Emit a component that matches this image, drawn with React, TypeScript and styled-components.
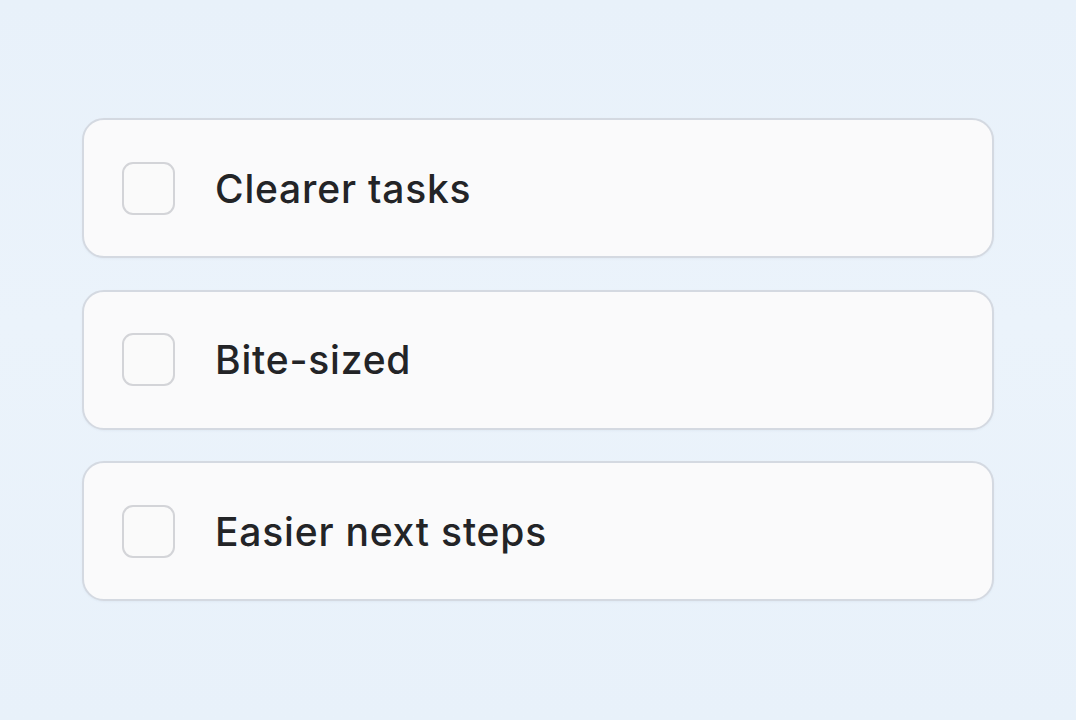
import { FC } from 'react'
import styled, { createGlobalStyle } from 'styled-components'

const GlobalStyle = createGlobalStyle`
    html, body {
        margin: 0;
        padding: 0;
        background: #e9f2fa;
    }
    body {
        font-family: Inter, "Noto Sans", "Liberation Sans", sans-serif;
    }
`

const Page = styled.div`
    width: 1076px;
    height: 720px;
    box-sizing: border-box;
    padding: 118px 0 0 82px;
    background: linear-gradient(180deg, #e8f1fa 0%, #ebf3fb 45%, #e8f1fa 100%);
`

const List = styled.ul`
    width: 912px;
    margin: 0;
    padding: 0;
    list-style: none;
    display: flex;
    flex-direction: column;
    gap: 31.5px;
`

const Card = styled.li`
    height: 140px;
    box-sizing: border-box;
    display: flex;
    align-items: center;
    padding: 0 38px;
    gap: 40px;
    background: #fafafb;
    border: 2px solid #d4d9e1;
    border-radius: 22px;
    box-shadow: 0 1px 2px rgba(120, 135, 160, 0.08);
`

const Box = styled.span`
    flex: 0 0 53px;
    height: 53px;
    box-sizing: border-box;
    border: 2px solid #d3d4d8;
    border-radius: 11px;
    background: #fafafa;
`

const Label = styled.span`
    font-size: 39px;
    font-weight: 500;
    letter-spacing: 0.8px;
    color: #232427;
`

const tasks = ['Clearer tasks', 'Bite-sized', 'Easier next steps']

const TaskRow: FC<{ name: string }> = ({ name }) => (
    <Card>
        <Box />
        <Label>{name}</Label>
    </Card>
)

const App: FC = () => (
    <>
        <GlobalStyle />
        <Page>
            <List>
                {tasks.map((t) => <TaskRow key={t} name={t} />)}
            </List>
        </Page>
    </>
)

export default App
